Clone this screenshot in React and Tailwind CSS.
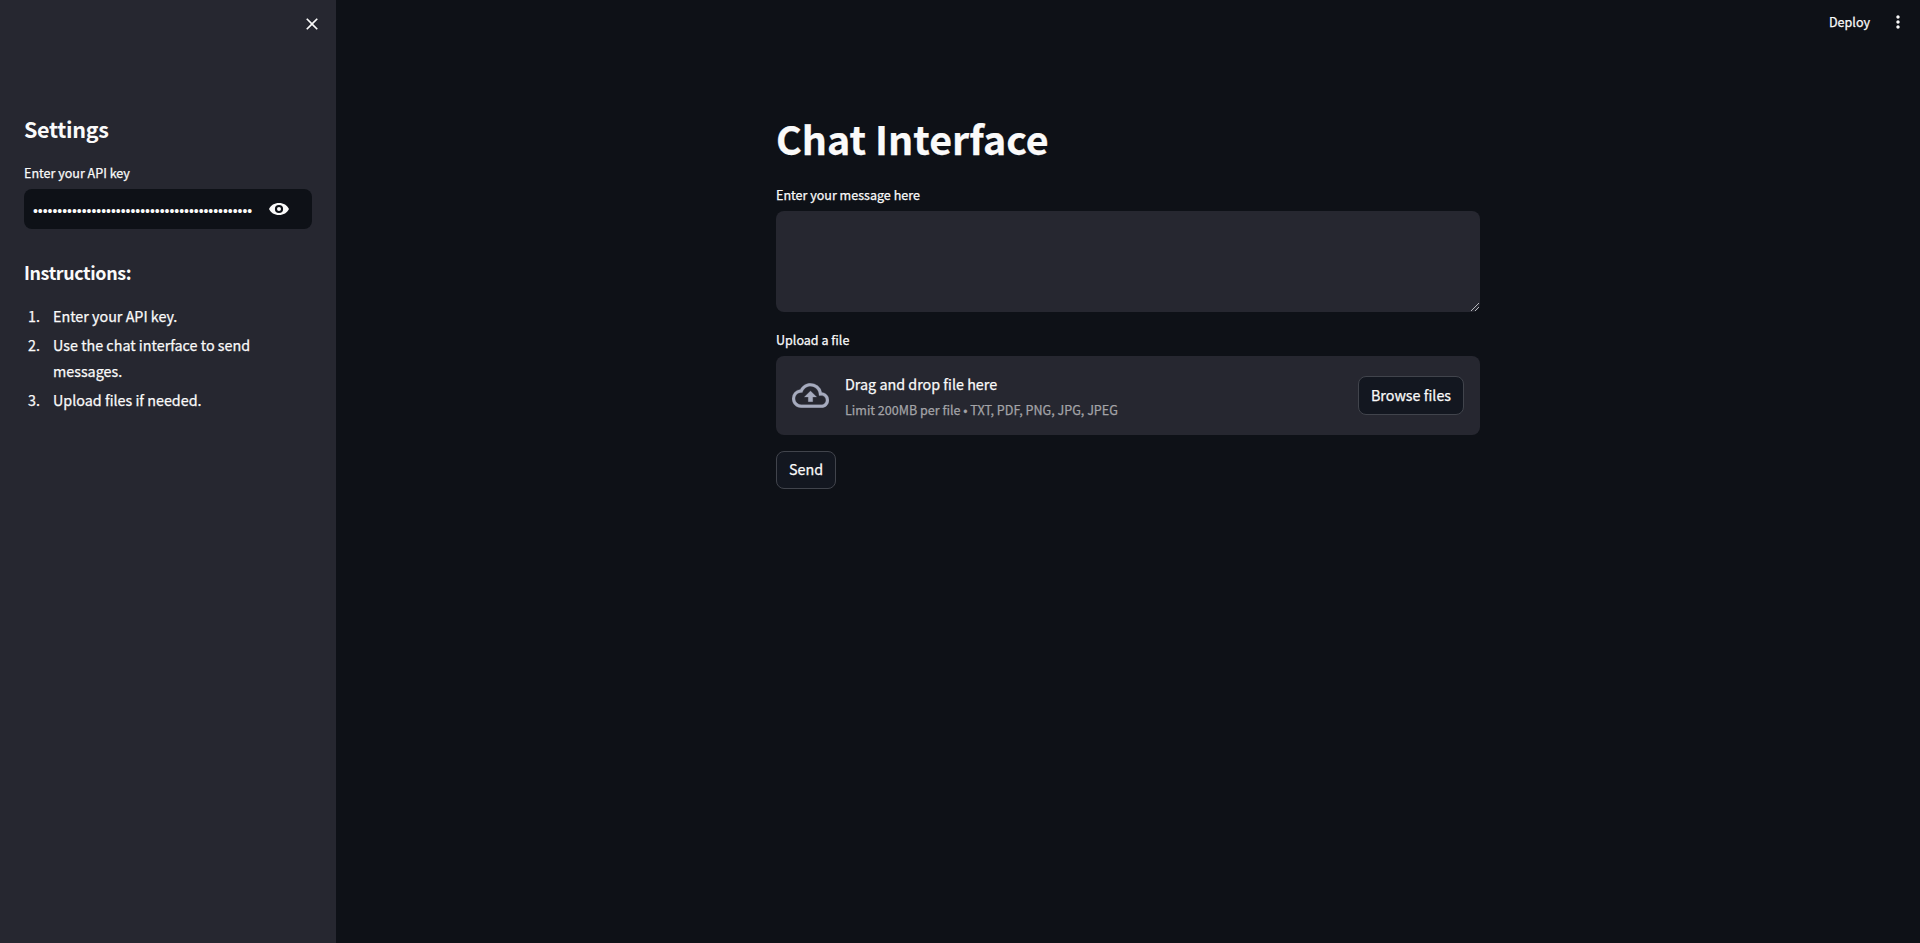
import { MdClose, MdMoreVert } from "react-icons/md";

const bullets = "•".repeat(45);

const EyeIcon = ({ className }) => (
  <svg viewBox="0 0 20 12" className={className} fill="currentColor">
    <path
      fillRule="evenodd"
      d="M0 6C1.8 2.2 5.4 0 10 0s8.2 2.2 10 6c-1.8 3.8-5.4 6-10 6S1.8 9.800 0 6zM10 1.900a4.100 4.100 0 1 0 0 8.200 4.100 4.100 0 0 0 0-8.200zM10 4a2 2 0 1 1 0 4 2 2 0 0 1 0-4z"
    />
  </svg>
);

const CloudUploadIcon = ({ className }) => (
  <svg viewBox="0 0 24 16" className={className} fill="currentColor" stroke="currentColor" strokeWidth="0.15">
    <path
      transform="translate(0 -4)"
      d="M19.35 10.04A7.49 7.49 0 0 0 12 4C9.11 4 6.6 5.64 5.35 8.04A5.994 5.994 0 0 0 0 14c0 3.31 2.69 6 6 6h13c2.76 0 5-2.24 5-5 0-2.64-2.05-4.78-4.65-4.96zM19 18H6c-2.21 0-4-1.79-4-4s1.79-4 4-4h.71C7.37 7.69 9.48 6 12 6c3.04 0 5.5 2.46 5.5 5.5v.5H19c1.66 0 3 1.34 3 3s-1.34 3-3 3zM8 13h2.55v3h2.9v-3H16l-4-4z"
    />
  </svg>
);

const Label = ({ children }) => (
  <div className="h-[21px] text-[12.55px] leading-[21px] whitespace-nowrap">{children}</div>
);

const Button = ({ children, className }) => (
  <button className={"flex items-center justify-center rounded-lg border border-[#41444c] bg-[#131720] pb-0.5 whitespace-nowrap " + className}>
    {children}
  </button>
);

function Sidebar() {
  return (
    <aside className="flex w-84 flex-none flex-col bg-[#262730] px-6">
      <div className="-mr-2.5 flex h-[114px] items-start justify-end pt-3.5">
        <MdClose className="size-5" />
      </div>
      <h2 className="text-[21.5px] leading-[29px] font-semibold tracking-[-0.3px] [-webkit-text-stroke:0px]">Settings</h2>
      <div className="mt-[19px]">
        <Label>Enter your API key</Label>
      </div>
      <div className="mt-1.5 flex h-10 items-center rounded-lg bg-[#0e1117] pl-[9px]">
        <div className="w-[222px] pt-[3px] font-['Liberation_Sans',sans-serif] text-sm leading-6 tracking-[-0.03px] whitespace-nowrap [-webkit-text-stroke:0px]">
          {bullets}
        </div>
        <EyeIcon className="ml-3.5 h-3 w-5" />
      </div>
      <h3 className="mt-[31px] text-[17.9px] leading-6 font-semibold tracking-[-0.38px] [-webkit-text-stroke:0px]">Instructions:</h3>
      <ol className="mt-[19px] flex flex-col gap-[3px] leading-[26px]">
        {["Enter your API key.", "Use the chat interface to send messages.", "Upload files if needed."].map((t, i) => (
          <li key={t} className="flex">
            <span className="w-[29px] flex-none pl-1">{i + 1}.</span>
            <span className="w-[230px]">{t}</span>
          </li>
        ))}
      </ol>
    </aside>
  );
}

export default function App() {
  return (
    <div className="flex h-[943px] w-full overflow-hidden bg-[#0e1117] font-['Noto_Sans_CJK_JP',sans-serif] text-[14.33px] text-[#fafafa] [-webkit-text-stroke:0.25px]">
      <Sidebar />
      <div className="flex flex-1 flex-col">
        <header className="flex h-[111px] items-start justify-end pt-[11px] pr-3">
          <span className="text-[12.55px] leading-[21px]">Deploy</span>
          <MdMoreVert className="mt-px ml-[18px] size-5" />
        </header>
        <main className="ml-[440px] flex w-[704px] flex-col">
          <h1 className="text-[39.4px] leading-[53px] font-bold">Chat Interface</h1>
          <div className="mt-5">
            <Label>Enter your message here</Label>
          </div>
          <div className="relative mt-1.5 h-[101px]">
            <textarea className="block size-full resize-none rounded-lg bg-[#262730]" />
            <svg viewBox="0 0 8 8" className="absolute right-px bottom-px size-2" fill="none" stroke="#c4c5c9" strokeWidth="0.9">
              <path d="M0 8L8 0M4 8L8 4" />
            </svg>
          </div>
          <div className="mt-[17px]">
            <Label>Upload a file</Label>
          </div>
          <section className="mt-1.5 flex h-[79px] items-center rounded-lg bg-[#262730] px-4">
            <CloudUploadIcon className="h-[25px] w-[37px] text-[#a6abbe]" />
            <div className="ml-4 flex flex-1 flex-col pt-[2px]">
              <span className="leading-[26px]">Drag and drop file here</span>
              <span className="text-[12.55px] leading-[25px] text-[#a3a3a7]">
                Limit 200MB per file • TXT, PDF, PNG, JPG, JPEG
              </span>
            </div>
            <Button className="h-[39px] w-[106px]">Browse files</Button>
          </section>
          <Button className="mt-4 h-[38px] w-[60px]">Send</Button>
        </main>
      </div>
    </div>
  );
}
